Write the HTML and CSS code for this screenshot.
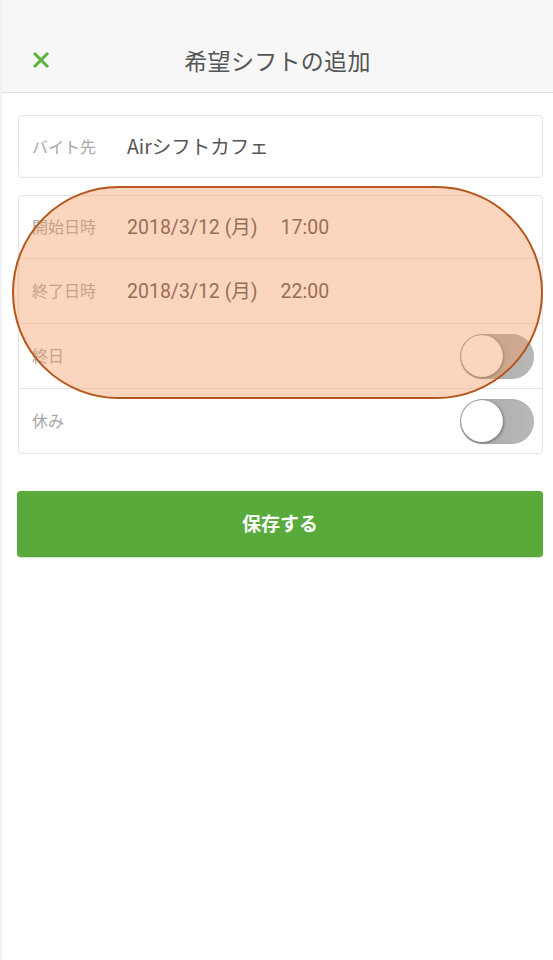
FILE: index.html
```html
<!DOCTYPE html>
<html lang="ja">
<head>
<meta charset="utf-8">
<link rel="stylesheet" href="styles.css">
</head>
<body>
<div class="page">
  <header class="header">
    <div class="bar">
      <span class="close">
        <svg width="18" height="18" viewBox="0 0 18 18"><path d="M2 2L16 16M16 2L2 16" stroke="#5cb33f" stroke-width="3" stroke-linecap="butt"/></svg>
      </span>
      <h1 class="title">希望シフトの追加</h1>
    </div>
  </header>
  <main class="content">
    <section class="card">
      <div class="row">
        <span class="label">バイト先</span>
        <span class="value value-jp">Airシフトカフェ</span>
      </div>
    </section>
    <section class="card card-multi">
      <div class="row">
        <span class="label">開始日時</span>
        <span class="value">2018/3/12 (月)<span class="time">17:00</span></span>
      </div>
      <div class="row">
        <span class="label">終了日時</span>
        <span class="value">2018/3/12 (月)<span class="time">22:00</span></span>
      </div>
      <div class="row">
        <span class="label">終日</span>
        <span class="toggle"><span class="knob"></span></span>
      </div>
      <div class="row">
        <span class="label">休み</span>
        <span class="toggle"><span class="knob"></span></span>
      </div>
      <div class="highlight"></div>
    </section>
    <button class="save">保存する</button>
  </main>
</div>
</body>
</html>
```

FILE: styles.css
```css
html, body {
  margin: 0;
  padding: 0;
  background: #fff;
}
body {
  font-family: "Noto Sans CJK JP", "Noto Sans", sans-serif;
  border-left: 2px solid #f1f1f1;
  min-height: 960px;
  box-sizing: border-box;
}
.header {
  background: #f7f7f7;
  border-bottom: 1px solid #dcdcdc;
  padding-top: 28px;
}
.bar {
  height: 64px;
  display: flex;
  align-items: center;
  justify-content: center;
  position: relative;
}
.close {
  position: absolute;
  left: 30px;
  top: 23px;
  width: 18px;
  height: 18px;
  display: flex;
}
.title {
  margin: 0;
  font-size: 23px;
  font-weight: 400;
  color: #555;
  letter-spacing: 0.3px;
}
.content {
  padding: 22px 10px 0 15px;
  display: flex;
  flex-direction: column;
}
.card {
  border: 1px solid #e4e4e4;
  border-radius: 4px;
  background: #fff;
  margin-left: 1px;
}
.card + .card {
  margin-top: 17px;
}
.card-multi {
  position: relative;
}
.row {
  height: 61px;
  display: flex;
  align-items: center;
  padding: 0 8px 2px 13px;
  box-sizing: border-box;
}
.card-multi .row {
  height: 62px;
  padding-bottom: 3px;
}
.card-multi .row + .row {
  height: 65px;
  border-top: 1px solid #e6e6e6;
}
.label {
  width: 95px;
  font-size: 16px;
  color: #a8a8a8;
}
.value {
  font-family: "Roboto", "Noto Sans CJK JP", sans-serif;
  font-size: 19.5px;
  color: #555;
  flex: 1;
}
.value-jp {
  font-family: "Noto Sans CJK JP", sans-serif;
  font-size: 19.5px;
}
.time {
  margin-left: 23px;
}
.toggle {
  margin-left: auto;
  margin-top: 3px;
  width: 74px;
  height: 45px;
  border-radius: 23px;
  background: linear-gradient(to right, #a9a9a7, #b8b8b6);
  position: relative;
  box-shadow: inset 0 0 1px rgba(0,0,0,0.2);
}
.knob {
  position: absolute;
  left: 1px;
  top: 1px;
  width: 42px;
  height: 42px;
  border-radius: 50%;
  background: #fff;
  box-shadow: 1px 1px 3px rgba(0,0,0,0.35), 0 0 1px rgba(0,0,0,0.3);
}
.highlight {
  position: absolute;
  left: -7px;
  top: -10px;
  width: 531px;
  height: 213px;
  box-sizing: border-box;
  border: 2px solid #b5561e;
  border-radius: 107px;
  background: rgba(245, 150, 90, 0.4);
}
.save {
  margin-top: 37px;
  margin-left: 0;
  height: 66px;
  border: none;
  border-radius: 4px;
  background: #58aa3a;
  color: #fff;
  font-family: "Noto Sans CJK JP", sans-serif;
  font-size: 19px;
  font-weight: 700;
  padding-bottom: 4px;
  box-shadow: 0 1px 1px rgba(0,0,0,0.15);
}
```
